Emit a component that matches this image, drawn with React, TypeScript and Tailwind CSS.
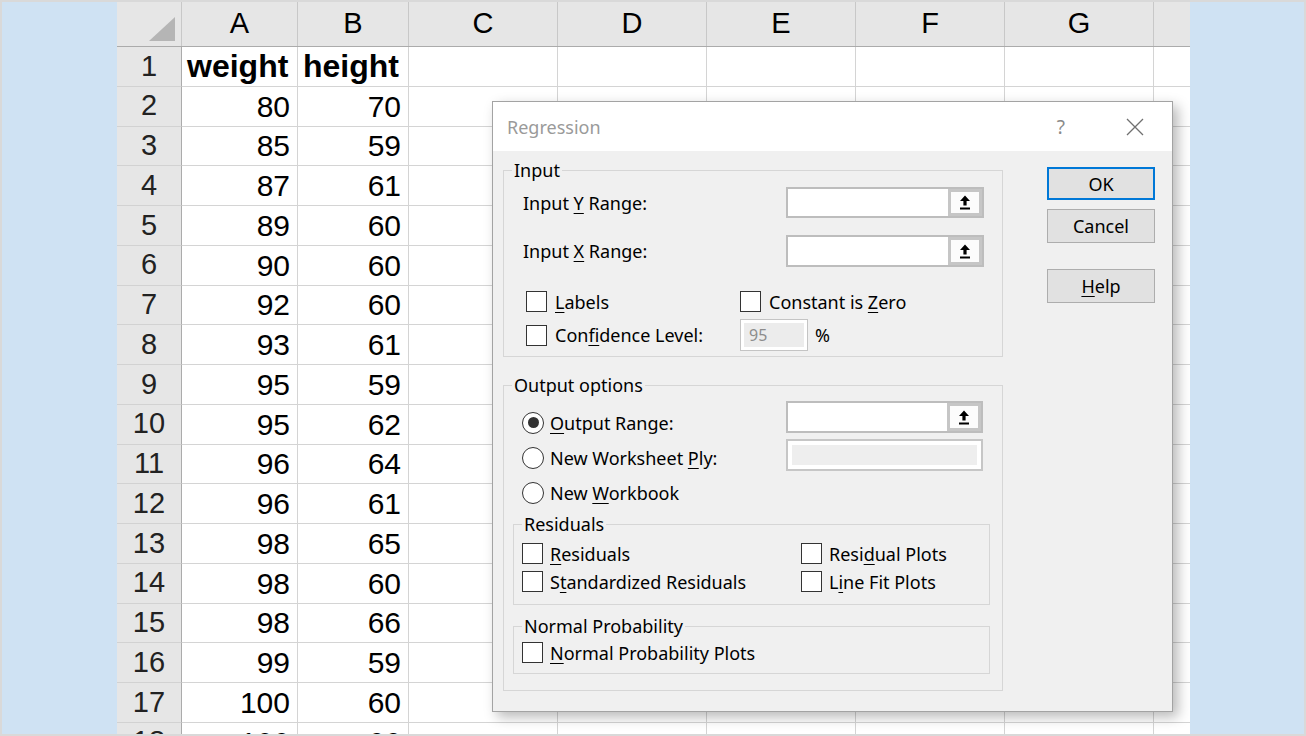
import clsx from 'clsx'

const data = [
  ['weight', 'height'],
  ['80', '70'],
  ['85', '59'],
  ['87', '61'],
  ['89', '60'],
  ['90', '60'],
  ['92', '60'],
  ['93', '61'],
  ['95', '59'],
  ['95', '62'],
  ['96', '64'],
  ['96', '61'],
  ['98', '65'],
  ['98', '60'],
  ['98', '66'],
  ['99', '59'],
  ['100', '60'],
  ['100', '66'],
]

const blankCols = ['C', 'D', 'E', 'F', 'G']

function SheetRow({ n, a, b }: { n: number; a: string; b: string }) {
  const bold = n === 1
  return (
    <div className="flex h-[39.75px] shrink-0">
      <div className="w-[65px] shrink-0 bg-[#e6e6e6] border-r border-r-[#ababab] border-b border-b-[#d2d2d2] flex items-center justify-center text-[29px] text-[#222]">
        {n}
      </div>
      <div
        className={clsx(
          'w-[116px] shrink-0 border-r border-b border-[#d4d4d4] flex items-center',
          bold ? 'font-bold text-[32px] pl-[5px]' : 'text-[30px] justify-end pr-[7px]'
        )}
      >
        {a}
      </div>
      <div
        className={clsx(
          'w-[111px] shrink-0 border-r border-b border-[#d4d4d4] flex items-center',
          bold ? 'font-bold text-[32px] pl-[5px]' : 'text-[30px] justify-end pr-[7px]'
        )}
      >
        {b}
      </div>
      {blankCols.map((c) => (
        <div key={c} className="w-[149px] shrink-0 border-r border-b border-[#d4d4d4]" />
      ))}
      <div className="flex-1 border-b border-[#d4d4d4]" />
    </div>
  )
}

function Check() {
  return <span className="w-[21px] h-[21px] shrink-0 border border-[#333] bg-white" />
}

function Radio({ on }: { on?: boolean }) {
  return (
    <span className="w-[22px] h-[22px] shrink-0 rounded-full border-[1.5px] border-[#333] bg-white flex items-center justify-center">
      {on && <span className="w-[11px] h-[11px] rounded-full bg-[#333]" />}
    </span>
  )
}

function RefBox({ w, h }: { w: string; h: string }) {
  return (
    <div className={clsx('flex bg-white border-2 border-[#bdbdbd]', w, h)}>
      <div className="flex-1" />
      <div className="w-[34px] h-full border-[3px] border-[#c6c6c6] bg-[#fcfcfc] flex items-center justify-center">
        <svg width="10" height="15" viewBox="0 0 10 15">
          <polygon points="5,0.5 10,6 6.6,6 6.6,10.5 3.4,10.5 3.4,6 0,6" fill="#000" />
          <rect x="0" y="12.5" width="10" height="2" fill="#000" />
        </svg>
      </div>
    </div>
  )
}

function Btn({ children, primary, className }: { children: React.ReactNode; primary?: boolean; className?: string }) {
  return (
    <button
      className={clsx(
        'w-[108px] flex items-center justify-center bg-[#e1e1e1] text-[18px] leading-[20px]',
        primary ? 'border-2 border-[#0078d7]' : 'border border-[#adadad]',
        className
      )}
    >
      {children}
    </button>
  )
}

function Regression() {
  return (
    <div className="absolute left-[375px] top-[99px] w-[681px] h-[611px] bg-[#f0f0f0] border border-[#a3a3a3] shadow-[5px_5px_12px_rgba(0,0,0,0.28)] flex flex-col font-['Noto_Sans',sans-serif] text-[18px] leading-[20px] text-black">
      <div className="h-[49px] shrink-0 bg-white flex items-center pl-[14px] pr-[28px]">
        <span className="text-[18px] text-[#9a9a9a]">Regression</span>
        <span className="ml-auto text-[19px] text-[#8a8a8a]">?</span>
        <svg className="ml-[61px]" width="18" height="18" viewBox="0 0 18 18">
          <path d="M1 1 L17 17 M17 1 L1 17" stroke="#707070" strokeWidth="1.3" fill="none" />
        </svg>
      </div>

      <div className="flex pt-[9px] pl-[10px]">
        <div className="w-[500px] flex flex-col">
          <fieldset className="border border-[#d6d6d6] pb-[5px]">
            <legend className="ml-[8px] px-[2px]">Input</legend>
            <div className="mt-[7px] flex items-center h-[31px] pl-[19px] pr-[18px]">
              <span>
                Input <u className="underline-offset-[3px]">Y</u> Range:
              </span>
              <div className="ml-auto">
                <RefBox w="w-[198px]" h="h-[31px]" />
              </div>
            </div>
            <div className="mt-[17px] flex items-center h-[32px] pl-[19px] pr-[18px]">
              <span>
                Input <u className="underline-offset-[3px]">X</u> Range:
              </span>
              <div className="ml-auto">
                <RefBox w="w-[198px]" h="h-[32px]" />
              </div>
            </div>
            <div className="mt-[24px] flex items-center h-[21px] pl-[22px]">
              <label className="flex items-center w-[214px]">
                <Check />
                <span className="ml-[8px]">
                  <u className="underline-offset-[3px]">L</u>abels
                </span>
              </label>
              <label className="flex items-center">
                <Check />
                <span className="ml-[8px]">
                  Constant is <u className="underline-offset-[3px]">Z</u>ero
                </span>
              </label>
            </div>
            <div className="mt-[7px] flex items-center h-[32px] pl-[22px]">
              <label className="flex items-center w-[214px]">
                <Check />
                <span className="ml-[8px]">
                  Con<u className="underline-offset-[3px]">f</u>idence Level:
                </span>
              </label>
              <div className="w-[68px] h-[32px] border border-[#c4c4c4] bg-white p-[3px]">
                <div className="h-full bg-[#ececec] text-[#8c8c8c] pl-[5px] leading-[24px] text-[16px]">95</div>
              </div>
              <span className="ml-[7px]">%</span>
            </div>
          </fieldset>

          <fieldset className="mt-[18px] border border-[#d6d6d6] pb-[16px]">
            <legend className="ml-[8px] px-[2px]">Output options</legend>
            <div className="flex pr-[19px]">
              <div className="mt-[10px] pl-[18px] flex flex-col">
                <div className="h-[35px] flex items-center">
                  <Radio on />
                  <span className="ml-[6px]">
                    <u className="underline-offset-[3px]">O</u>utput Range:
                  </span>
                </div>
                <div className="h-[35px] flex items-center">
                  <Radio />
                  <span className="ml-[6px]">
                    New Worksheet <u className="underline-offset-[3px]">P</u>ly:
                  </span>
                </div>
                <div className="h-[35px] flex items-center">
                  <Radio />
                  <span className="ml-[6px]">
                    New <u className="underline-offset-[3px]">W</u>orkbook
                  </span>
                </div>
              </div>
              <div className="ml-auto mt-[6px] flex flex-col gap-[6px]">
                <RefBox w="w-[197px]" h="h-[32px]" />
                <div className="w-[197px] h-[32px] border-2 border-[#c6c6c6] bg-white p-[4px]">
                  <div className="h-full bg-[#eeeeee]" />
                </div>
              </div>
            </div>

            <fieldset className="mt-[4px] ml-[9px] mr-[12px] border border-[#d6d6d6] pb-[12px]">
              <legend className="ml-[8px] px-[2px]">Residuals</legend>
              <div className="mt-[9px] flex items-center h-[21px] pl-[8px]">
                <label className="flex items-center w-[279px]">
                  <Check />
                  <span className="ml-[7px]">
                    <u className="underline-offset-[3px]">R</u>esiduals
                  </span>
                </label>
                <label className="flex items-center">
                  <Check />
                  <span className="ml-[7px]">
                    Resi<u className="underline-offset-[3px]">d</u>ual Plots
                  </span>
                </label>
              </div>
              <div className="mt-[7px] flex items-center h-[21px] pl-[8px]">
                <label className="flex items-center w-[279px]">
                  <Check />
                  <span className="ml-[7px]">
                    S<u className="underline-offset-[3px]">t</u>andardized Residuals
                  </span>
                </label>
                <label className="flex items-center">
                  <Check />
                  <span className="ml-[7px]">
                    L<u className="underline-offset-[3px]">i</u>ne Fit Plots
                  </span>
                </label>
              </div>
            </fieldset>

            <fieldset className="mt-[11px] ml-[9px] mr-[12px] border border-[#d6d6d6] pb-[10px]">
              <legend className="ml-[8px] px-[2px]">Normal Probability</legend>
              <div className="mt-[6px] flex items-center h-[21px] pl-[8px]">
                <label className="flex items-center">
                  <Check />
                  <span className="ml-[7px]">
                    <u className="underline-offset-[3px]">N</u>ormal Probability Plots
                  </span>
                </label>
              </div>
            </fieldset>
          </fieldset>
        </div>

        <div className="ml-[44px] pt-[7px] flex flex-col">
          <Btn primary className="h-[33px]">OK</Btn>
          <Btn className="mt-[9px] h-[34px]">Cancel</Btn>
          <Btn className="mt-[26px] h-[34px]">
            <span>
              <u className="underline-offset-[3px]">H</u>elp
            </span>
          </Btn>
        </div>
      </div>
    </div>
  )
}

export default function App() {
  return (
    <div className="w-[1306px] h-[736px] border-2 border-[#d9d9d9] bg-[#cfe2f3] flex overflow-hidden">
      <div className="w-[115px] shrink-0" />
      <div className="relative w-[1073px] shrink-0 bg-white overflow-hidden flex flex-col font-['Liberation_Sans',Arial,sans-serif] text-black">
        <div className="flex h-[45px] shrink-0 bg-[#e6e6e6] border-b border-[#ababab]">
          <div className="w-[65px] shrink-0 border-r border-[#c8c8c8] flex items-end justify-end pr-[6px] pb-[5px]">
            <svg width="26" height="24" viewBox="0 0 26 24">
              <polygon points="26,0 26,24 0,24" fill="#b5b5b5" />
            </svg>
          </div>
          <div className="w-[116px] shrink-0 border-r border-[#c8c8c8] flex items-center justify-center text-[29px]">A</div>
          <div className="w-[111px] shrink-0 border-r border-[#c8c8c8] flex items-center justify-center text-[29px]">B</div>
          {blankCols.map((c) => (
            <div key={c} className="w-[149px] shrink-0 border-r border-[#c8c8c8] flex items-center justify-center text-[29px]">
              {c}
            </div>
          ))}
          <div className="flex-1" />
        </div>
        {data.map((r, i) => (
          <SheetRow key={i} n={i + 1} a={r[0]} b={r[1]} />
        ))}
        <Regression />
      </div>
      <div className="flex-1" />
    </div>
  )
}
